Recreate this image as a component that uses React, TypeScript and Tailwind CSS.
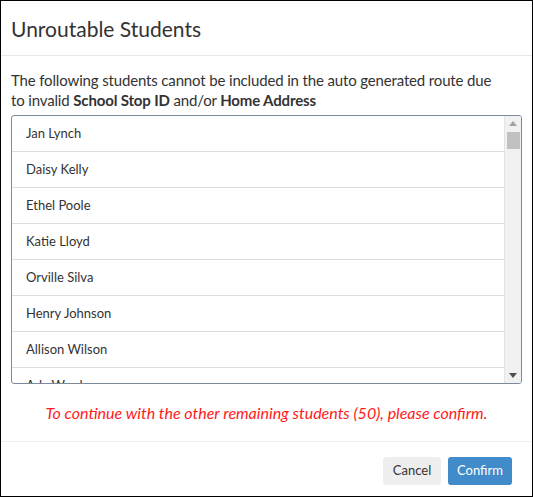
import React from "react";

const names = [
  "Jan Lynch",
  "Daisy Kelly",
  "Ethel Poole",
  "Katie Lloyd",
  "Orville Silva",
  "Henry Johnson",
  "Allison Wilson",
  "Ada Ward",
];

export default function App() {
  return (
    <div
      className="w-[533px] h-[497px] border border-black bg-white text-[#333333] flex flex-col overflow-hidden"
      style={{ fontFamily: "Lato, 'Open Sans', sans-serif" }}
    >
      <div className="h-[55px] shrink-0 border-b border-[#e8e8e8] flex items-center px-[10px]">
        <h1 className="text-[21px] leading-none font-normal text-[#333]">Unroutable Students</h1>
      </div>
      <div className="px-[10px] pt-[14px]">
        <p className="text-[15px] leading-[20px] tracking-[-0.15px]">
          The following students cannot be included in the auto generated route due
          <br />
          to invalid <b>School Stop ID</b> and/or <b>Home Address</b>
        </p>
        <div className="mt-[5px] h-[269px] border border-[#7b8a9c] rounded-[3px] flex overflow-hidden">
          <div className="flex-1 overflow-hidden">
            {names.map((n, i) => (
              <div
                key={n}
                className={`h-[36px] shrink-0 flex items-center pl-[14px] text-[13px] ${i < names.length - 1 ? "border-b border-[#dddddd]" : ""}`}
              >
                {n}
              </div>
            ))}
          </div>
          <div className="w-[17px] shrink-0 bg-[#f1f1f1] border-l border-[#e3e3e3] flex flex-col items-center">
            <div className="h-[15px] w-full flex items-center justify-center">
              <svg width="8" height="5" viewBox="0 0 8 5"><path d="M0 5 L4 0 L8 5 Z" fill="#a3a3a3" /></svg>
            </div>
            <div className="w-[13px] h-[17px] bg-[#c1c1c1] mt-[1px]" />
            <div className="flex-1" />
            <div className="h-[15px] w-full flex items-center justify-center">
              <svg width="8" height="5" viewBox="0 0 8 5"><path d="M0 0 L8 0 L4 5 Z" fill="#505050" /></svg>
            </div>
          </div>
        </div>
      </div>
      <div className="h-[58px] shrink-0 border-b border-[#eeeeee] flex items-center justify-center">
        <span className="italic text-[16px] text-[#ff1a1a]">
          To continue with the other remaining students (50), please confirm.
        </span>
      </div>
      <div className="flex-1 flex justify-end items-start pt-[15px] pr-[20px] gap-[7px]">
        <button className="h-[28px] w-[58px] rounded-[3px] bg-[#eeeeee] text-[13px] text-[#333]">Cancel</button>
        <button className="h-[28px] w-[64px] rounded-[3px] bg-[#428bca] text-[13px] text-white">Confirm</button>
      </div>
    </div>
  );
}
